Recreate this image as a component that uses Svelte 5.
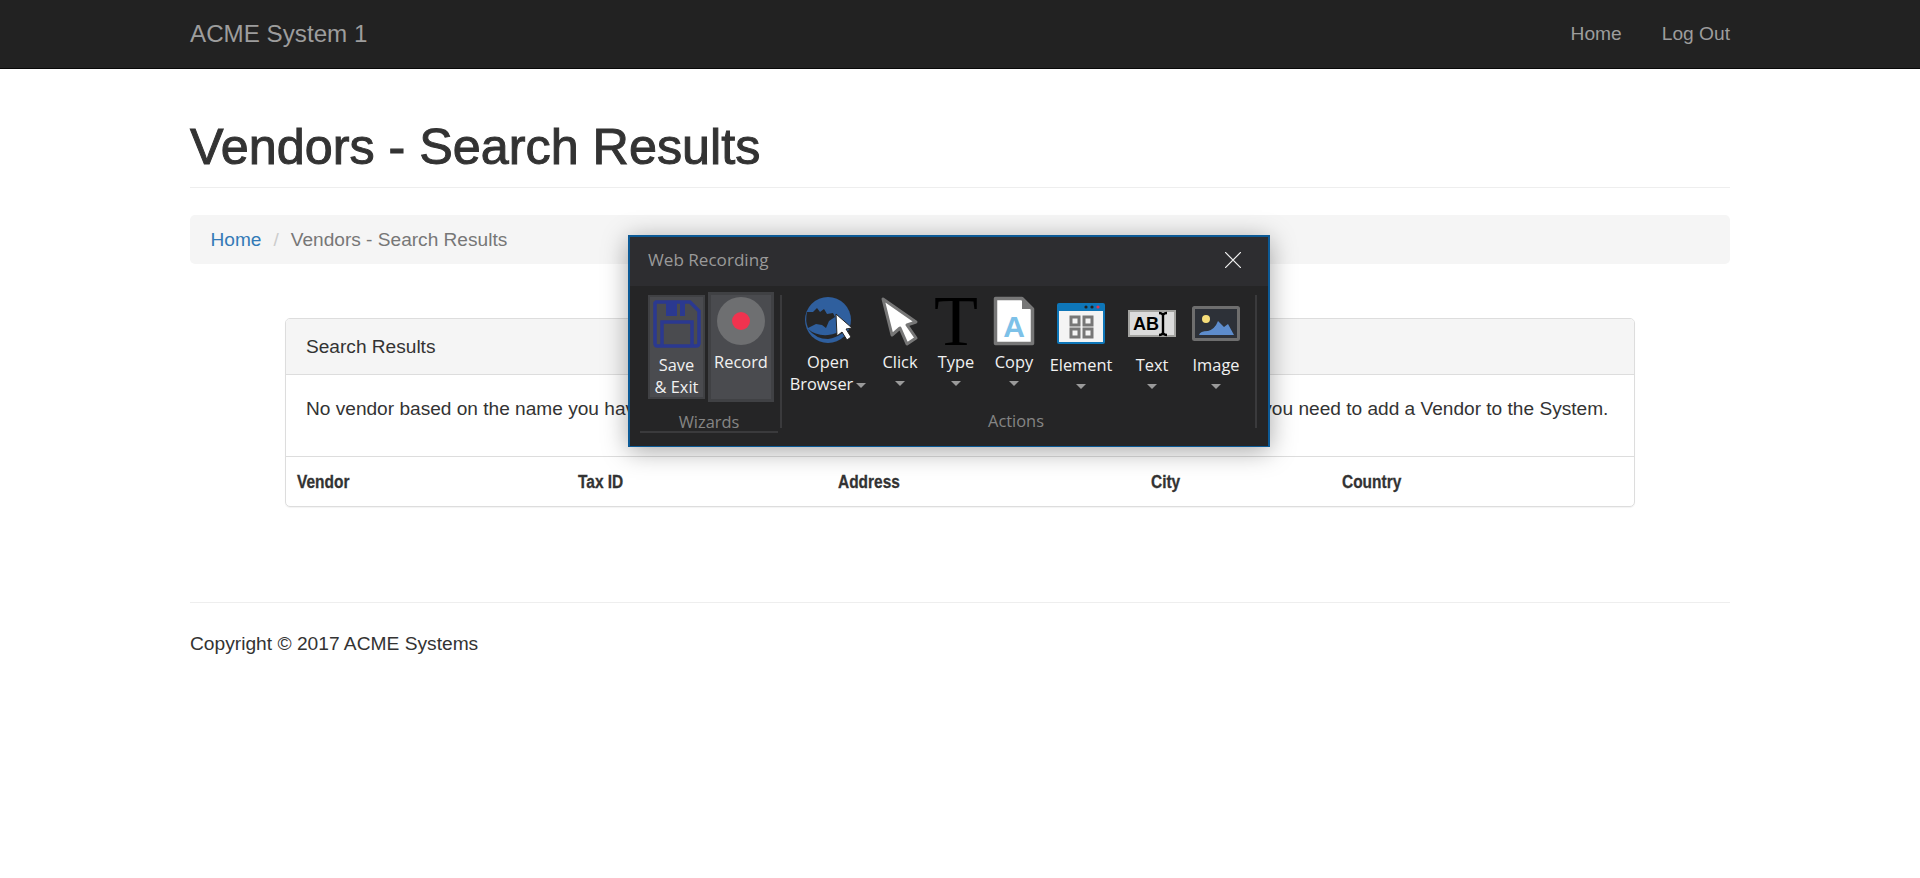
<script>
  const columns = ['Vendor', 'Tax ID', 'Address', 'City', 'Country'];
</script>

<nav class="navbar">
  <div class="container nav-inner">
    <span class="brand">ACME System 1</span>
    <div class="nav-links">
      <span>Home</span>
      <span>Log Out</span>
    </div>
  </div>
</nav>

<main class="container">
  <h1>Vendors - Search Results</h1>

  <div class="breadcrumb">
    <a href="#home">Home</a>
    <span class="slash">/</span>
    <span class="current">Vendors - Search Results</span>
  </div>

  <section class="panel">
    <div class="panel-heading">Search Results</div>
    <p class="panel-body">No vendor based on the name you have entered was found. Please review your search criteria, and see whether you need to add a Vendor to the System.</p>
    <div class="table-head">
      {#each columns as col}
        <span><b>{col}</b></span>
      {/each}
    </div>
  </section>

  <footer>Copyright © 2017 ACME Systems</footer>
</main>

<div class="recorder">
  <div class="rec-title">
    <span>Web Recording</span>
    <svg width="16" height="16" viewBox="0 0 16 16"><path d="M0 0L16 16M16 0L0 16" stroke="#f0f0f0" stroke-width="1.2" fill="none" /></svg>
  </div>
  <div class="ribbon">
    <div class="group wizards">
      <div class="wizard-row">
        <div class="wiz save">
          <svg width="48" height="48" viewBox="0 0 48 48">
            <path d="M3 2H37L46 11V43Q46 46 43 46H4Q2 46 2 43V3Z" fill="none" stroke="#2b3990" stroke-width="3.5" />
            <rect x="13" y="2" width="11" height="14" fill="#2b3990" />
            <rect x="27" y="2" width="5" height="14" fill="#2b3990" />
            <path d="M9 46V22H39V46" fill="none" stroke="#2b3990" stroke-width="3.5" />
          </svg>
          <span>Save</span>
          <span>&amp; Exit</span>
        </div>
        <div class="wiz record">
          <svg width="48" height="48" viewBox="0 0 48 48">
            <circle cx="24" cy="24" r="24" fill="#6e6f71" />
            <circle cx="24" cy="24" r="9" fill="#f0334f" />
          </svg>
          <span>Record</span>
        </div>
      </div>
      <div class="group-label">Wizards</div>
    </div>

    <div class="group actions">
      <div class="tools">
        <div class="tool">
          <svg width="48" height="48" viewBox="0 0 48 48">
            <circle cx="24" cy="23" r="23" fill="#2f5f9e" />
            <path d="M3 15L9 15L13 11L16 15L20 12L23 17L29 16L31 20L25 24L22 31L18 28L12 27L4 31Q1 24 3 15Z" fill="#252526" />
            <path d="M4 32Q12 39 24 38Q33 37 41 31L40 35Q32 41 24 42Q12 42 4 32Z" fill="#252526" />
            <path d="M32 17L48 31L42 32L47 40L43 43L38 35L33 39Z" fill="#fff" stroke="#252526" stroke-width="1" />
          </svg>
          <span class="label">Open</span>
          <span class="label">Browser<i class="caret inline"></i></span>
        </div>
        <div class="tool">
          <svg width="48" height="48" viewBox="0 0 48 48">
            <path d="M7 2L40 25L31 28L40 41L31 47L24 31L16 38Z" fill="#fff" stroke="#777" stroke-width="3" stroke-linejoin="round" />
          </svg>
          <span class="label">Click</span>
          <i class="caret"></i>
        </div>
        <div class="tool">
          <svg class="serif-t" width="48" height="48" viewBox="0 0 48 48">
            <text x="24" y="48" text-anchor="middle">T</text>
          </svg>
          <span class="label">Type</span>
          <i class="caret"></i>
        </div>
        <div class="tool">
          <svg width="48" height="48" viewBox="0 0 48 48">
            <path d="M5.5 1.5H32L42.5 12V46.5H5.5Z" fill="#fff" stroke="#777" stroke-width="3.5" stroke-linejoin="round" />
            <path d="M32 1.5L42.5 12H32Z" fill="#777" />
            <text class="doc-a" x="24" y="40" text-anchor="middle">A</text>
          </svg>
          <span class="label">Copy</span>
          <i class="caret"></i>
        </div>
        <div class="tool low">
          <svg width="48" height="48" viewBox="0 0 48 48">
            <rect y="6" width="48" height="41" rx="2" fill="#0e76b8" />
            <rect x="2" y="14" width="44" height="31" fill="#f4f4f4" />
            <circle cx="29" cy="10" r="1.6" fill="#222" />
            <circle cx="35" cy="10" r="1.6" fill="#222" />
            <circle cx="41" cy="10" r="1.6" fill="#e8344f" />
            <g fill="none" stroke="#777" stroke-width="3">
              <rect x="14" y="20" width="8" height="8" />
              <rect x="27" y="20" width="8" height="8" />
              <rect x="14" y="32" width="8" height="8" />
              <rect x="27" y="32" width="8" height="8" />
            </g>
          </svg>
          <span class="label">Element</span>
          <i class="caret"></i>
        </div>
        <div class="tool low">
          <svg width="48" height="48" viewBox="0 0 48 48">
            <rect x="1" y="14" width="46" height="25" fill="#dcdcdc" stroke="#a3a3a0" stroke-width="2" />
            <text class="abi" x="5" y="33">AB</text>
            <path d="M31 16Q34 16 35 18Q36 16 39 16M35 18V36M31 38Q34 38 35 36Q36 38 39 38" fill="none" stroke="#000" stroke-width="2.4" />
          </svg>
          <span class="label">Text</span>
          <i class="caret"></i>
        </div>
        <div class="tool low">
          <svg width="48" height="48" viewBox="0 0 48 48">
            <rect x="1.5" y="10.5" width="45" height="32" rx="1" fill="#2d3138" stroke="#6e6e6e" stroke-width="3" />
            <circle cx="14" cy="22" r="4" fill="#f5dd7a" />
            <path d="M7 38Q8 34 16 34Q23 32 26 24L32 30L36 27L42 38Z" fill="#5d8ccc" />
          </svg>
          <span class="label">Image</span>
          <i class="caret"></i>
        </div>
      </div>
      <div class="group-label actions-label">Actions</div>
    </div>
  </div>
</div>

<style>
  :global(body) {
    margin: 0;
    background: #fff;
    color: #333;
    font-family: "Liberation Sans", Arial, sans-serif;
    font-size: 19.2px;
    line-height: 27px;
  }

  .container {
    width: 1540px;
    margin: 0 auto;
  }

  .navbar {
    height: 68px;
    background: #222;
    border-bottom: 1px solid #080808;
  }

  .nav-inner {
    display: flex;
    justify-content: space-between;
    align-items: center;
    height: 67px;
  }

  .brand {
    color: #9d9d9d;
    font-size: 24.2px;
  }

  .nav-links {
    display: flex;
    gap: 40px;
    color: #9d9d9d;
  }

  h1 {
    margin: 48px 0 27px;
    padding-bottom: 10px;
    border-bottom: 1px solid #eee;
    font-size: 50.3px;
    font-weight: 500;
    line-height: 60px;
    -webkit-text-stroke: 1px #333;
  }

  .breadcrumb {
    display: flex;
    align-items: center;
    height: 49px;
    padding: 0 20.5px;
    background: #f5f5f5;
    border-radius: 5px;
    color: #777;
    font-size: 19.1px;
  }

  .breadcrumb a {
    color: #337ab7;
    text-decoration: none;
  }

  .slash {
    margin: 0 12px;
    color: #ccc;
  }

  .panel {
    width: 1350px;
    margin: 54px auto 0;
    box-sizing: border-box;
    border: 1px solid #ddd;
    border-radius: 5px;
    box-shadow: 0 1px 1px rgba(0, 0, 0, 0.05);
    font-size: 19.1px;
  }

  .panel-heading {
    height: 55px;
    line-height: 55px;
    padding: 0 20px;
    background: #f5f5f5;
    border-bottom: 1px solid #ddd;
    border-radius: 4px 4px 0 0;
  }

  .panel-body {
    height: 81px;
    margin: 0;
    padding: 0 20px;
    line-height: 67px;
    border-bottom: 1px solid #ddd;
    white-space: nowrap;
  }

  .table-head {
    display: grid;
    grid-template-columns: 281px 260px 313px 191px 1fr;
    height: 49px;
    padding-left: 11px;
    align-items: center;
  }

  .table-head b {
    display: inline-block;
    transform: scaleX(0.81);
    transform-origin: left center;
    -webkit-text-stroke: 0.3px #333;
  }

  footer {
    margin-top: 95px;
    padding-top: 27px;
    border-top: 1px solid #eee;
  }

  .recorder {
    position: absolute;
    left: 628px;
    top: 235px;
    width: 642px;
    height: 212px;
    box-sizing: border-box;
    border: 2px solid #0c5a96;
    border-bottom-width: 1px;
    background: #252526;
    box-shadow: 0 4px 24px rgba(0, 0, 0, 0.35);
    font-family: "Open Sans", "Noto Sans", sans-serif;
    font-size: 16.4px;
    line-height: 22px;
    color: #f1f1f1;
  }

  .rec-title {
    display: flex;
    justify-content: space-between;
    align-items: center;
    height: 49px;
    padding: 0 27px 3px 18px;
    box-sizing: border-box;
    background: #2d2d30;
    color: #9a9a9a;
    font-size: 17.1px;
  }

  .ribbon {
    display: flex;
    height: 159px;
    padding: 6px 0 0 10px;
    box-sizing: border-box;
  }

  .group {
    display: flex;
    flex-direction: column;
  }

  .wizards {
    width: 138px;
    height: 141px;
    border-bottom: 2px solid #3a3a3c;
    box-sizing: border-box;
  }

  .wizard-row {
    display: flex;
    align-items: center;
    gap: 3px;
    height: 110px;
    padding-left: 8px;
  }

  .wiz {
    display: flex;
    flex-direction: column;
    align-items: center;
    box-sizing: border-box;
    padding-top: 3px;
    background: #4a4b4f;
    border: 2px solid #404144;
  }

  .wiz svg {
    margin-bottom: 6px;
    flex: none;
  }

  .save {
    width: 57px;
    height: 104px;
  }

  .record {
    width: 66px;
    height: 110px;
    border-width: 3px;
    padding-top: 2px;
  }

  .group-label {
    margin-top: 9px;
    text-align: center;
    color: #858585;
  }

  .actions-label {
    flex: none;
    margin-top: 8px;
    padding-left: 3px;
  }

  .actions {
    width: 477px;
    height: 133px;
    margin-left: 2px;
    padding: 0 16px 0 8px;
    box-sizing: border-box;
    border-left: 2px solid #3a3a3c;
    border-right: 2px solid #3a3a3c;
    margin-top: 3px;
  }

  .tools {
    display: grid;
    flex: none;
    grid-template-columns: 76px 68px 44px 72px 62px 80px 48px;
    height: 105px;
    margin-top: 2px;
  }

  .tool {
    display: flex;
    flex-direction: column;
    align-items: center;
    white-space: nowrap;
  }

  .tool svg {
    flex: none;
    margin-bottom: 6px;
    overflow: visible;
  }

  .tool.low svg {
    margin-bottom: 9px;
  }

  .caret {
    display: block;
    flex: none;
    width: 0;
    height: 0;
    margin-top: 8px;
    border-left: 5px solid transparent;
    border-right: 5px solid transparent;
    border-top: 5px solid #9a9a9a;
  }

  .caret.inline {
    display: inline-block;
    margin: 0 0 2px 3px;
  }

  .serif-t text {
    font-family: "Liberation Serif", serif;
    font-size: 72px;
    fill: #000;
  }

  .doc-a {
    font-family: "Liberation Sans", sans-serif;
    font-size: 30px;
    font-weight: 700;
    fill: #7dc1e8;
  }

  .abi {
    font-family: "Liberation Sans", sans-serif;
    font-size: 18px;
    font-weight: 700;
    fill: #000;
  }
</style>
